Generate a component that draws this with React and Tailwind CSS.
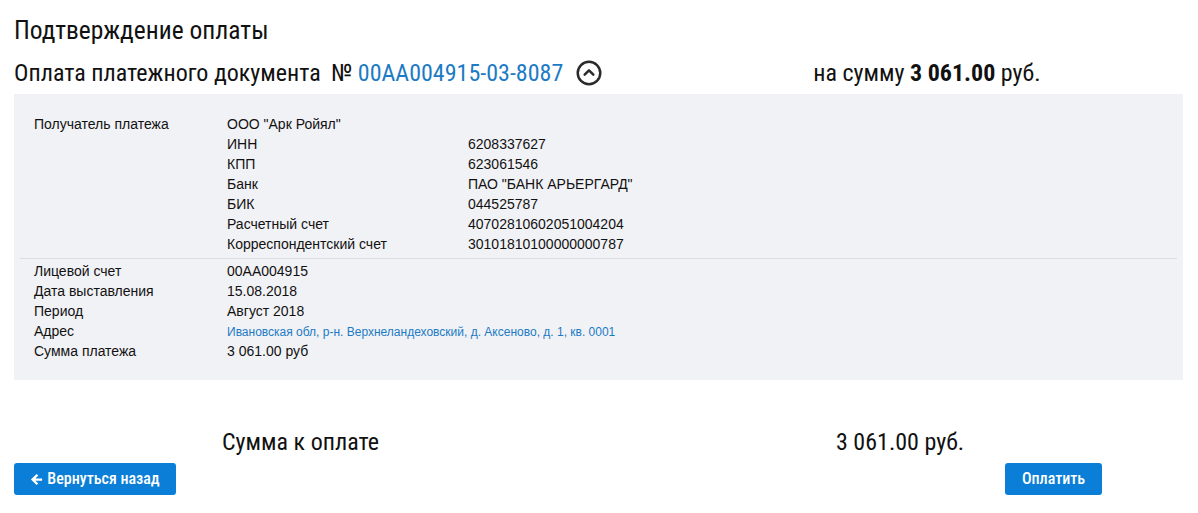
import React from 'react';

const recipient = [
  ['ИНН', '6208337627'],
  ['КПП', '623061546'],
  ['Банк', 'ПАО "БАНК АРЬЕРГАРД"'],
  ['БИК', '044525787'],
  ['Расчетный счет', '40702810602051004204'],
  ['Корреспондентский счет', '30101810100000000787'],
];

const CircleUp = () => (
  <svg width="26" height="26" viewBox="0 0 24 24" fill="none" stroke="#2b2b2b" strokeWidth="2.3" strokeLinecap="round" strokeLinejoin="round">
    <circle cx="12" cy="12" r="10.4" />
    <path d="M8 13.6l4-4 4 4" />
  </svg>
);

const Row = ({ label, children }) => (
  <div className="grid grid-cols-[193px_1fr] h-5 items-center">
    <div>{label}</div>
    <div>{children}</div>
  </div>
);

const App = () => {
  return (
    <div className="w-[1198px] h-[513px] bg-white px-[14px] text-[#111] font-['Roboto',sans-serif] font-stretch-condensed">
      {/* Header */}
      <h1 className="pt-[14px] h-[52px] text-[25.5px] leading-[32px]">Подтверждение оплаты</h1>
      <div className="flex items-center h-[42px] text-[24px]">
        <span className="w-[317px]">Оплата платежного документа</span>
        <span>№ <span className="text-[#1c7bc4]">00АА004915-03-8087</span></span>
        <span className="ml-[13px] flex"><CircleUp /></span>
        <span className="ml-[211px]">на сумму <b className="font-bold">3 061.00</b> руб.</span>
      </div>

      {/* Invoice details */}
      <div className="w-[1169px] bg-[#f1f2f6] pt-[20px] pb-[19px] px-[6px] text-[14px] font-['Liberation_Sans',Arial,sans-serif] font-stretch-normal text-[#111]">
        <div className="px-[14px] pb-[4px]">
          <Row label="Получатель платежа">ООО "Арк Ройял"</Row>
          {recipient.map(([k, v]) => (
            <div key={k} className="grid grid-cols-[193px_241px_1fr] h-5 items-center">
              <div />
              <div>{k}</div>
              <div>{v}</div>
            </div>
          ))}
        </div>
        <div className="border-t border-[#dcdde1] px-[14px] pt-[2px]">
          <Row label="Лицевой счет">00АА004915</Row>
          <Row label="Дата выставления">15.08.2018</Row>
          <Row label="Период">Август 2018</Row>
          <Row label="Адрес">
            <span className="text-[12px] text-[#1c7bc4]">Ивановская обл, р-н. Верхнеландеховский, д. Аксеново, д. 1, кв. 0001</span>
          </Row>
          <Row label="Сумма платежа">3 061.00 руб</Row>
        </div>
      </div>

      {/* Total */}
      <div className="flex items-center h-[40px] mt-[42px] text-[24px]">
        <span className="ml-[208px] w-[614px]">Сумма к оплате</span>
        <span>3 061.00 руб.</span>
      </div>
      <div className="flex justify-between w-[1088px] mt-[1px]">
        <button className="flex items-center gap-[4px] h-[32px] w-[162px] justify-center bg-[#0b7fd7] text-white text-[16px] font-medium rounded-[3px]">
          <svg width="13" height="13" viewBox="0 0 14 14" fill="white">
            <path d="M7.1 1l1.8 1.8-3 3H13v2.5H5.9l3 3L7.1 13 1 7z" />
          </svg>
          Вернуться назад
        </button>
        <button className="h-[32px] w-[97px] bg-[#0b7fd7] text-white text-[16px] font-medium rounded-[3px]">Оплатить</button>
      </div>
    </div>
  );
};

export default App;
